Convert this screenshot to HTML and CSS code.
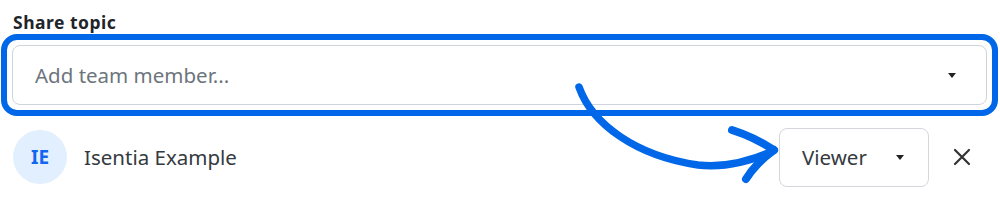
FILE: index.html
```html
<!DOCTYPE html>
<html>
<head>
<meta charset="utf-8">
<link rel="stylesheet" href="styles.css">
</head>
<body>
<div class="panel">
  <div class="label">Share topic</div>
  <div class="highlight">
    <div class="select-input">
      <span class="placeholder">Add team member...</span>
      <span class="caret"></span>
    </div>
  </div>
  <div class="member">
    <div class="avatar">IE</div>
    <div class="name">Isentia Example</div>
    <div class="role">
      <span>Viewer</span>
      <span class="caret"></span>
    </div>
    <svg class="close" width="18" height="18" viewBox="0 0 18 18"><path d="M2 2L16 16M16 2L2 16" stroke="#333" stroke-width="2.2" stroke-linecap="round"/></svg>
  </div>
  <svg class="arrow" width="1000" height="202" viewBox="0 0 1000 202">
    <g fill="none" stroke="#0068e8" stroke-linecap="round" stroke-linejoin="round">
      <path d="M579 87 C592 124 636 156 698 165 C724 168 750 161 771 152" stroke-width="7.5"/>
      <path d="M732 130 Q754 137 774 150" stroke-width="8"/>
      <path d="M746 179 Q756 163 774 150" stroke-width="8"/>
    </g>
  </svg>
</div>
</body>
</html>
```
FILE: styles.css
```css
* { box-sizing: border-box; }
html, body { margin: 0; padding: 0; background: #fff; }
body { font-family: "Noto Sans", "Open Sans", sans-serif; }
.panel { position: relative; width: 1000px; height: 202px; padding: 11px 2px 0 1px; }
.label { font-size: 17.5px; font-weight: 700; color: #212529; line-height: 22px; padding-left: 12px; height: 23px; letter-spacing: 0.5px; }
.highlight {
  border: 6px solid #0068e8;
  border-radius: 16px;
  padding: 5px;
  width: 997px;
}
.select-input {
  height: 60px;
  border: 1px solid #cfd4da;
  border-radius: 8px;
  display: flex;
  align-items: center;
  justify-content: space-between;
  padding: 0 30px 0 22px;
}
.placeholder { font-size: 20.5px; color: #6c757d; }
.caret { width: 0; height: 0; border-left: 4px solid transparent; border-right: 4px solid transparent; border-top: 5px solid #222; }
.member { display: flex; align-items: center; margin-top: 11px; padding-left: 12px; height: 60px; }
.avatar {
  width: 54px; height: 54px; border-radius: 50%;
  background: #e1efff; color: #1466ee;
  display: flex; align-items: center; justify-content: center;
  font-size: 19px; font-weight: 700;
}
.name { font-size: 20.5px; color: #343a40; margin-left: 17px; flex: 1; }
.role {
  width: 150px; height: 59px;
  border: 1px solid #d3d7dc; border-radius: 8px;
  display: flex; align-items: center; justify-content: space-between;
  padding: 0 24px 0 22px;
  font-size: 20.5px; color: #343a40;
}
.close { margin-left: 24px; margin-right: 27px; }
.arrow { position: absolute; left: 0; top: 0; pointer-events: none; }
```
